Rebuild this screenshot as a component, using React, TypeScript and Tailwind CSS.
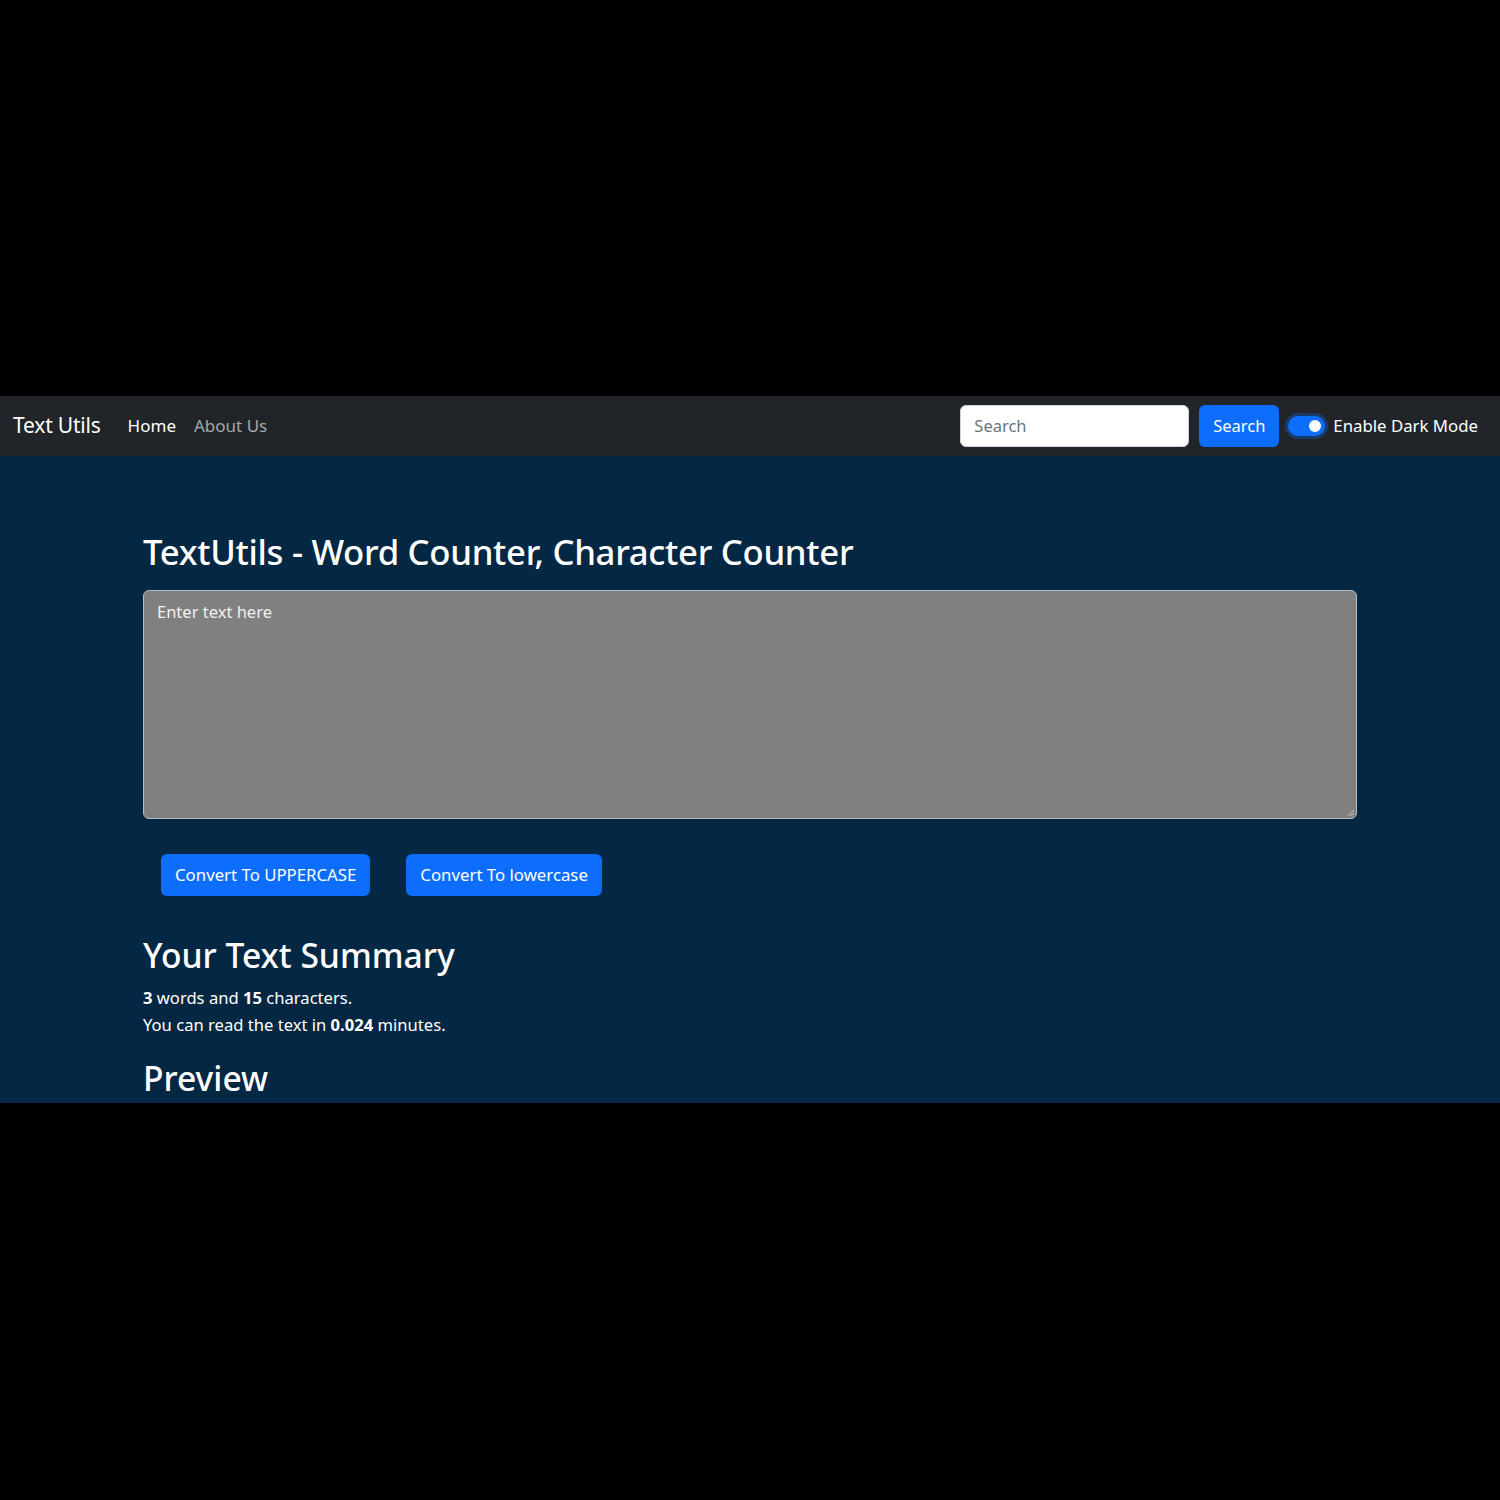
import React from "react";

export default function App() {
  const font = { fontFamily: '"Noto Sans", "Open Sans", sans-serif' };
  return (
    <div className="w-[1500px] h-[1500px] bg-black flex flex-col overflow-hidden" style={font}>
      <div className="h-[396px] shrink-0" />
      <nav className="h-[60px] shrink-0 bg-[#212529] flex items-center pl-[13px] pr-[22px]">
        <span className="text-[21px] text-white mr-[27px] tracking-[-0.2px]">Text Utils</span>
        <span className="text-[17px] text-white mr-[18px]">Home</span>
        <span className="text-[17px] text-[#a6a8aa]">About Us</span>
        <div className="ml-auto flex items-center">
          <div className="w-[229px] h-[42px] bg-white rounded-[6px] border border-[#ced4da] flex items-center px-[13px] text-[16.5px] text-[#6c757d]">
            Search
          </div>
          <div className="ml-[10px] w-[80px] h-[42px] bg-[#0d6efd] rounded-[6px] flex items-center justify-center text-[16.5px] text-white">
            Search
          </div>
          <div className="ml-[9px] w-[37px] h-[20px] rounded-full bg-[#0d6efd] ring-[3px] ring-[#0d6efd]/30 flex items-center justify-end pr-[4px]">
            <div className="w-[12px] h-[12px] rounded-full bg-white" />
          </div>
          <span className="ml-[8px] text-[16.8px] text-white">Enable Dark Mode</span>
        </div>
      </nav>
      <main className="h-[647px] shrink-0 bg-[#042743] overflow-hidden">
        <div className="w-[1214px] mx-auto pt-[75px]">
          <h2 className="text-[34.7px] font-medium text-white leading-[1.2] mb-[17px] tracking-[-0.3px]">
            TextUtils - Word Counter, Character Counter
          </h2>
          <div className="h-[229px] bg-[#808080] border border-[#b6bcc4] rounded-[6px] relative px-[13px] pt-[9px] text-[16.5px] text-[#f0f0f0]">
            Enter text here
            <svg className="absolute right-[1px] bottom-[1px]" width="10" height="10" viewBox="0 0 10 10">
              <path d="M9 3 L3 9 M9 6 L6 9" stroke="#c8c8c8" strokeWidth="1" />
            </svg>
          </div>
          <div className="flex gap-[36px] mt-[35px] ml-[18px]">
            <div className="h-[42px] px-[14px] bg-[#0d6efd] rounded-[6px] flex items-center text-[16.8px] text-white">
              Convert To UPPERCASE
            </div>
            <div className="h-[42px] px-[14px] bg-[#0d6efd] rounded-[6px] flex items-center text-[16.8px] text-white">
              Convert To lowercase
            </div>
          </div>
          <h2 className="text-[33.6px] font-medium text-white leading-[1.2] mt-[39px] mb-[9px]">Your Text Summary</h2>
          <p className="text-[16.6px] text-white leading-[27px]">
            <b>3</b> words and <b>15</b> characters.
          </p>
          <p className="text-[16.6px] text-white leading-[27px]">
            You can read the text in <b>0.024</b> minutes.
          </p>
          <h2 className="text-[33.6px] font-medium text-white leading-[1.2] mt-[20px]">Preview</h2>
        </div>
      </main>
    </div>
  );
}
